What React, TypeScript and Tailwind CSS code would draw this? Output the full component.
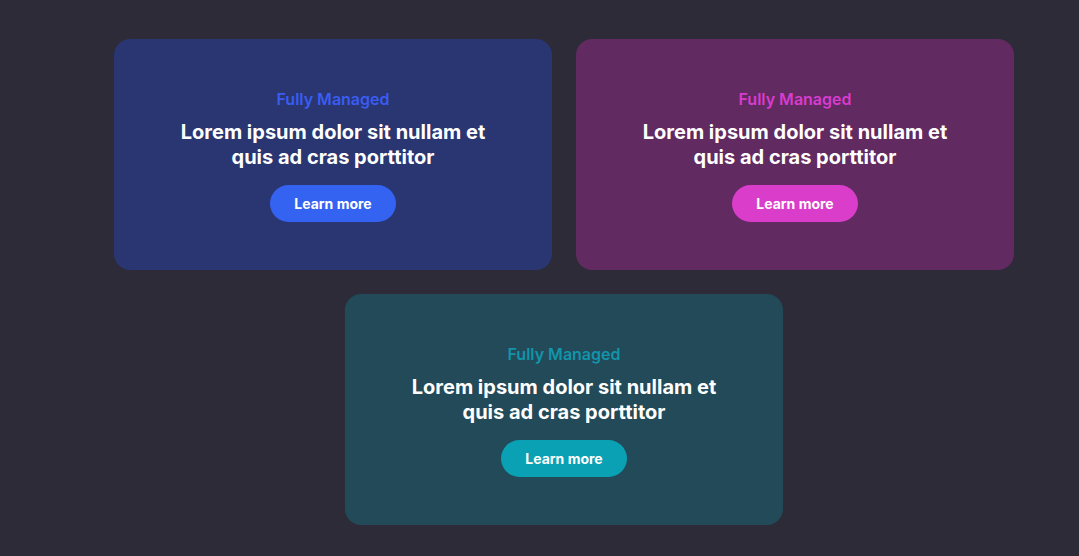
import React from 'react';

const cards = [
  { bg: 'bg-[#293671]', label: 'text-[#3a5cf2]', btn: 'bg-[#3563f1]' },
  { bg: 'bg-[#612a60]', label: 'text-[#d83ccf]', btn: 'bg-[#da3dca]' },
  { bg: 'bg-[#224a58]', label: 'text-[#1294aa]', btn: 'bg-[#0aa1b4]' },
];

const App: React.FC = () => {
  return (
    <div className="min-h-[556px] w-full bg-[#2d2b37] font-['Inter',sans-serif]">
      <div className="ml-[114px] flex w-[900px] flex-wrap justify-center gap-6 pt-[39px]">
        {cards.map((card, i) => (
          <div
            key={i}
            className={`flex h-[231px] w-[438px] flex-col items-center justify-center rounded-2xl ${card.bg}`}
          >
            <p className={`text-base font-semibold leading-6 ${card.label}`}>Fully Managed</p>
            <h2 className="mt-[9px] max-w-[320px] text-center text-[20px] font-bold leading-[25px] text-white">
              Lorem ipsum dolor sit nullam et quis ad cras porttitor
            </h2>
            <button
              className={`mt-[15px] h-[37px] rounded-full px-6 text-sm font-bold text-white ${card.btn}`}
            >
              Learn more
            </button>
          </div>
        ))}
      </div>
    </div>
  );
};

export default App;
